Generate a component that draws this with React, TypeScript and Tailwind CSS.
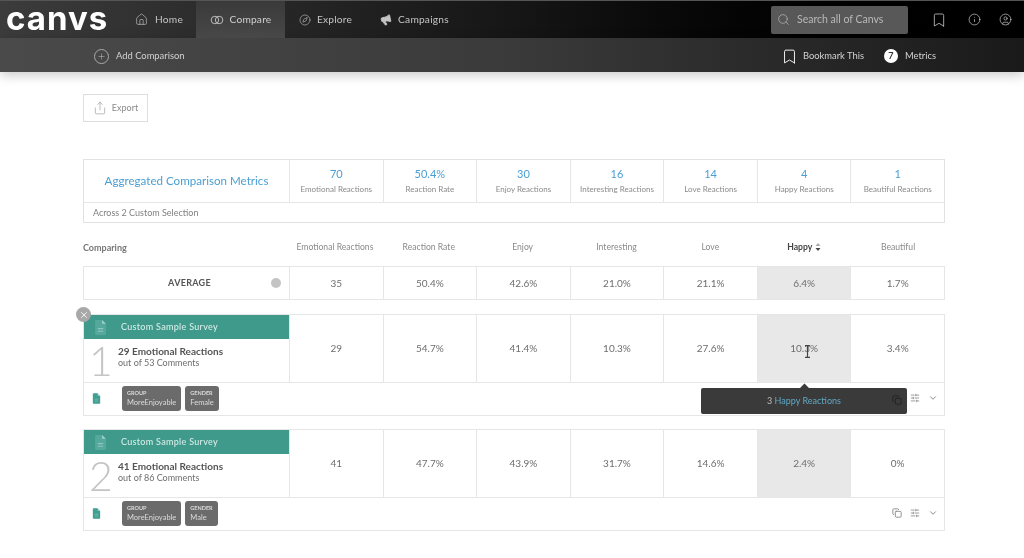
import React from "react";
import { House, Compass, Megaphone, Search, Bookmark, Info, CircleUser, Plus, Share, Copy, SlidersHorizontal, ChevronDown, X } from "lucide-react";

const font = { fontFamily: '"Lato", "Noto Sans", sans-serif' };
const cols = "grid grid-cols-[205px_repeat(7,1fr)]";
const cell = "flex items-center justify-center border-l border-[#e6e6e6] text-[10px] text-[#6e6e6e]";

const top = [
  ["70", "Emotional Reactions"],
  ["50.4%", "Reaction Rate"],
  ["30", "Enjoy Reactions"],
  ["16", "Interesting Reactions"],
  ["14", "Love Reactions"],
  ["4", "Happy Reactions"],
  ["1", "Beautiful Reactions"],
];
const heads = ["Emotional Reactions", "Reaction Rate", "Enjoy", "Interesting", "Love", "Happy", "Beautiful"];

function Doc({ className }: { className: string }) {
  return (
    <svg viewBox="0 0 12 15" className={className}>
      <path d="M1 1.5A1 1 0 0 1 2 .5h5.5L11 4v9.5a1 1 0 0 1-1 1H2a1 1 0 0 1-1-1z" fill="currentColor" />
      <path d="M7.5.5V4H11z" fill="#fff" fillOpacity=".45" />
      <path d="M3.5 8.5h5M3.5 11h5" stroke="#fff" strokeOpacity=".35" strokeWidth="1" />
    </svg>
  );
}

function Tag({ k, v }: { k: string; v: string }) {
  return (
    <div className="flex h-[25px] flex-col justify-center rounded-[3px] bg-[#6b6b6b] px-[5px] text-[#dcdcdc]">
      <span className="text-[5.5px] font-bold leading-[8px]">{k}</span>
      <span className="text-[7.5px] leading-[11px]">{v}</span>
    </div>
  );
}

function SampleRow({ n, reactions, comments, vals, tags, mt }: { n: string; reactions: string; comments: string; vals: string[]; tags: string[][]; mt: string }) {
  return (
    <div className={`border border-[#e6e6e6] ${mt}`}>
      <div className={`${cols} h-[67px]`}>
        <div className="flex flex-col">
          <div className="flex h-[24px] items-center bg-[#409a8c] pl-[10px]">
            <Doc className="h-[17px] w-[13px] text-[#54a99c]" />
            <span className="ml-[14px] text-[9px] font-medium tracking-[0.3px] text-[#d4ece7]">Custom Sample Survey</span>
          </div>
          <div className="flex flex-1 items-start">
            <span className="mt-[1px] w-[34px] text-center text-[41px] font-light leading-none text-[#c4c4c4]">{n}</span>
            <div className="mt-[6px] flex flex-col">
              <span className="text-[10px] font-bold leading-[12px] text-[#555]">{reactions}</span>
              <span className="text-[9px] leading-[11px] text-[#6e6e6e]">{comments}</span>
            </div>
          </div>
        </div>
        {vals.map((v, i) => (
          <div key={i} className={`${cell} ${i === 5 ? "bg-[#e8e8e8]" : ""}`}>{v}</div>
        ))}
      </div>
      <div className="flex h-[33px] items-center border-t border-[#e6e6e6] pb-[2px] pl-[8px] pr-[6px]">
        <Doc className="h-[11px] w-[9px] text-[#3f9f90]" />
        <div className="ml-[21px] flex gap-[4px]">
          {tags.map((t) => <Tag key={t[0]} k={t[0]} v={t[1]} />)}
        </div>
        <div className="ml-auto flex items-center gap-[8px] text-[#8a8a8a]">
          <Copy size={10} strokeWidth={2.2} />
          <SlidersHorizontal size={10} strokeWidth={2} />
          <ChevronDown size={10} strokeWidth={2.4} />
        </div>
      </div>
    </div>
  );
}

export default function App() {
  return (
    <div className="relative h-[558px] w-[1024px] overflow-hidden bg-white blur-[0.4px]" style={font}>
      <header className="flex h-[38px] items-stretch border-t border-[#555] bg-gradient-to-r from-[#3c3c3c] via-[#161616] via-50% to-black">
        <span className="mb-[3px] ml-[6px] w-[123px] self-center text-[33px] font-bold leading-[33px] tracking-[1px] text-white" style={{ fontFamily: '"Inter", sans-serif' }}>canvs</span>
        <div className="flex items-center gap-[7px] px-[6px] text-[10.2px] tracking-[0.2px] text-[#c4c4c4]">
          <House size={13} strokeWidth={1.2} />
          <span>Home</span>
        </div>
        <div className="ml-[7px] flex w-[89px] items-center justify-center gap-[6px] bg-gradient-to-b from-[#3a3a3a] to-[#484848] text-[10.2px] tracking-[0.2px] text-[#d0d0d0]">
          <svg viewBox="0 0 16 12" className="h-[10px] w-[14px]" fill="none" stroke="currentColor" strokeWidth="1"><circle cx="5.5" cy="6" r="4.5" /><circle cx="10.5" cy="6" r="4.5" /></svg>
          <span>Compare</span>
        </div>
        <div className="ml-[14px] flex items-center gap-[6px] text-[10.2px] tracking-[0.2px] text-[#c4c4c4]">
          <Compass size={12} strokeWidth={1.2} />
          <span>Explore</span>
        </div>
        <div className="ml-[28px] flex items-center gap-[6px] text-[10.2px] tracking-[0.2px] text-[#c4c4c4]">
          <Megaphone size={12} strokeWidth={1.6} fill="currentColor" className="-rotate-12" />
          <span>Campaigns</span>
        </div>
        <div className="ml-auto flex items-center text-[#c8c8c8]">
          <div className="flex h-[28px] w-[137px] items-center rounded-[2px] bg-[#585858] pl-[6px] text-[10.5px] text-[#b8b8b8]">
            <Search size={13} strokeWidth={1.3} />
            <span className="ml-[7px]">Search all of Canvs</span>
          </div>
          <Bookmark size={16} strokeWidth={1.2} className="ml-[23px]" />
          <Info size={13} strokeWidth={1.3} className="ml-[21px]" />
          <CircleUser size={13} strokeWidth={1.3} className="ml-[18px] mr-[12px]" />
        </div>
      </header>
      <div className="flex h-[34px] items-center bg-gradient-to-r from-[#4a4a4a] via-[#3a3a3a] to-[#1a1a1a] pl-[94px] pr-[88px] pt-[2px] text-[9.4px] text-[#d2d2d2] shadow-[0_3px_12px_rgba(0,0,0,0.22)]">
        <span className="flex h-[15px] w-[15px] items-center justify-center rounded-full border border-[#aaa]"><Plus size={9} strokeWidth={1.2} /></span>
        <span className="ml-[7px]">Add Comparison</span>
        <Bookmark size={17} strokeWidth={1.3} className="ml-auto text-white" />
        <span className="ml-[5px]">Bookmark This</span>
        <span className="ml-[20px] flex h-[14px] w-[14px] items-center justify-center rounded-full bg-white text-[9px] font-bold text-[#333]">7</span>
        <span className="ml-[7px]">Metrics</span>
      </div>

      <main className="ml-[83px] w-[862px] pt-[22px]">
        <div className="flex h-[28px] w-[65px] items-center justify-center gap-[5px] border border-[#dedede] text-[9px] text-[#8a8a8a]">
          <Share size={14} strokeWidth={1} />
          <span>Export</span>
        </div>

        <div className="mt-[37px] border border-[#e2e2e2]">
          <div className={`${cols} h-[42px]`}>
            <div className="flex items-center justify-center text-[11.6px] text-[#4a9fd4]">Aggregated Comparison Metrics</div>
            {top.map((t) => (
              <div key={t[1]} className="flex flex-col items-center justify-center border-l border-[#e6e6e6]">
                <span className="text-[11px] leading-[14px] text-[#4a9fd4]">{t[0]}</span>
                <span className="mt-[3px] text-[8px] leading-[11px] text-[#8a8a8a]">{t[1]}</span>
              </div>
            ))}
          </div>
          <div className="flex h-[20px] items-center border-t border-[#e6e6e6] pl-[9px] text-[9px] text-[#808080]">Across 2 Custom Selection</div>
        </div>

        <div className={`${cols} h-[43px] items-center pt-[6px] text-[8.6px] text-[#8a8a8a]`}>
          <span className="text-[9px] font-bold text-[#777]">Comparing</span>
          {heads.map((h) => (
            <span key={h} className={`flex items-center justify-center gap-[3px] ${h === "Happy" ? "font-bold text-[#444]" : ""}`}>
              {h}
              {h === "Happy" && (
                <svg viewBox="0 0 6 8" className="h-[8px] w-[6px]"><path d="M3 0 5.5 3H.5z" fill="#aaa" /><path d="M3 8 5.5 5H.5z" fill="#444" /></svg>
              )}
            </span>
          ))}
        </div>

        <div className={`${cols} h-[34px] border border-[#e6e6e6]`}>
          <div className="relative flex items-center justify-center pl-[6px] text-[9px] font-bold tracking-[0.3px] text-[#555]">
            AVERAGE
            <span className="absolute right-[8px] h-[10px] w-[10px] rounded-full bg-[#c4c4c4]" />
          </div>
          {["35", "50.4%", "42.6%", "21.0%", "21.1%", "6.4%", "1.7%"].map((v, i) => (
            <div key={i} className={`${cell} ${i === 5 ? "bg-[#e8e8e8]" : ""}`}>{v}</div>
          ))}
        </div>

        <SampleRow mt="mt-[14px]" n="1" reactions="29 Emotional Reactions" comments="out of 53 Comments" vals={["29", "54.7%", "41.4%", "10.3%", "27.6%", "10.3%", "3.4%"]} tags={[["GROUP", "MoreEnjoyable"], ["GENDER", "Female"]]} />
        <SampleRow mt="mt-[13px]" n="2" reactions="41 Emotional Reactions" comments="out of 86 Comments" vals={["41", "47.7%", "43.9%", "31.7%", "14.6%", "2.4%", "0%"]} tags={[["GROUP", "MoreEnjoyable"], ["GENDER", "Male"]]} />
      </main>

      {/* overlays */}
      <span className="absolute left-[76px] top-[307px] flex h-[15px] w-[15px] items-center justify-center rounded-full bg-[#a8a8a8] text-white"><X size={10} /></span>
      <div className="absolute left-[701px] top-[388px] flex h-[26px] w-[206px] items-center justify-center rounded-[2px] bg-[#3a3a3a] text-[9px] text-[#bbb]">
        <span className="absolute -top-[3px] left-[100px] h-[7px] w-[7px] rotate-45 bg-[#3a3a3a]" />
        <span>3&nbsp;</span><span className="text-[#5fa8c4]">Happy Reactions</span>
        <Copy size={10} strokeWidth={2.2} className="absolute right-[5px] top-[7px] text-[#222]" />
      </div>
      <svg viewBox="0 0 7 13" className="absolute left-[804px] top-[345px] h-[13px] w-[7px]" fill="none" stroke="#444" strokeWidth="1.2"><path d="M1 .6h5M3.5.6v11.8M1 12.4h5" /></svg>
    </div>
  );
}
